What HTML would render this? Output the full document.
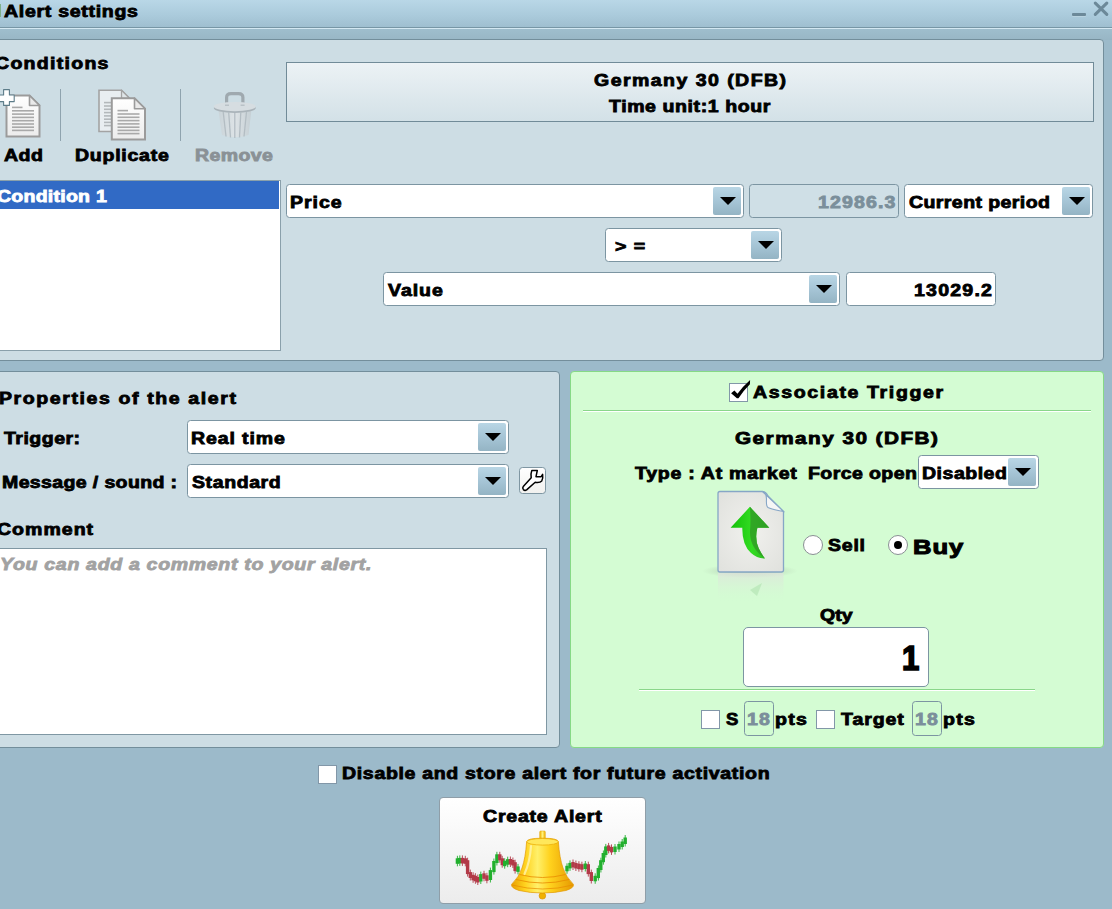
<!DOCTYPE html>
<html><head><meta charset="utf-8"><title>Alert settings</title>
<style>
*{box-sizing:border-box;margin:0;padding:0}
html,body{width:1112px;height:909px;overflow:hidden}
body{background:#9cbaca;font-family:"Liberation Sans",sans-serif;font-weight:bold;color:#000;position:relative;font-size:17.5px}
.abs{position:absolute}
.t{position:absolute;white-space:nowrap;line-height:1;transform-origin:0 0}
#title{left:0;top:0;width:1112px;height:28px;background:linear-gradient(#b9d7e7,#abcbdc 55%,#9fbfd0);border-bottom:1px solid #7796a5}
#band{left:0;top:28px;width:1112px;height:12px;background:linear-gradient(#9fbecd,#98b6c5);border-top:1px solid #d3e8f2}
.panel{position:absolute;background:#cddde4;border:1px solid #738e9b}
.combo{position:absolute;height:34px;background:#fff;border:1px solid #7c95a2;border-radius:3.5px}
.combo .btn{position:absolute;right:2px;top:2px;bottom:2px;width:28px;border-radius:2px;background:linear-gradient(#b9d6e5,#a6c5d6 50%,#94b4c4)}
.combo .btn:after{content:"";position:absolute;left:6.5px;top:10px;border-left:8px solid transparent;border-right:8px solid transparent;border-top:8.5px solid #000}
.field{position:absolute;height:34px;background:#fff;border:1px solid #7c95a2;border-radius:3.5px}
.cb{position:absolute;width:19px;height:19px;background:#fff;border:1px solid #8297a8}
</style></head><body>
<div id="title" class="abs"></div>
<div class="abs" style="left:0;top:4px;width:1px;height:13px;background:#7fb08a"></div>

<div class="abs" style="left:1072px;top:13px;width:14px;height:3px;background:#6c8999;border-radius:1px;box-shadow:0 1px 0 #b9d3e0"></div>
<svg class="abs" style="left:1092px;top:0px" width="18" height="18" viewBox="1092 0 18 18"><path d="M1095.3 3.2L1106.800 14.400M1106.800 3.200L1095.300 14.400" stroke="#6c8999" stroke-width="3.100" stroke-linecap="round" fill="none"/></svg>
<div id="band" class="abs"></div>

<!-- upper panel -->
<div class="panel" style="left:-4px;top:39px;width:1108px;height:322px;border-radius:4px"></div>

<div class="abs" style="left:286px;top:62px;width:808px;height:60px;border:1px solid #718b98;background:linear-gradient(#ecf2f5,#d3e1e7)"></div>


<div class="abs" style="left:60px;top:89px;width:1px;height:52px;background:#8fa3ae"></div>
<div class="abs" style="left:180px;top:89px;width:1px;height:52px;background:#8fa3ae"></div>
<svg class="abs" style="left:-2px;top:86px" width="46" height="54" viewBox="-2 86 46 54">
<defs><linearGradient id="dg" x1="0" y1="0" x2="0" y2="1"><stop offset="0" stop-color="#ffffff"/><stop offset="1" stop-color="#ececec"/></linearGradient></defs>
<path d="M6.5 95.5H29.5L39.5 105.5V136.5H6.5Z" fill="url(#dg)" stroke="#9b9b9b" stroke-width="2" stroke-linejoin="miter"/>
<path d="M29.5 95.5V105.5H39.5Z" fill="#e9e9e9" stroke="#9b9b9b" stroke-width="1.6" stroke-linejoin="round"/>
<path d="M12 107.4H22.5" stroke="#a9a9a9" stroke-width="1.6"/><path d="M12 110.8H34" stroke="#a9a9a9" stroke-width="1.6"/><path d="M12 114.1H34" stroke="#a9a9a9" stroke-width="1.6"/><path d="M12 117.4H34" stroke="#a9a9a9" stroke-width="1.6"/><path d="M12 120.7H34" stroke="#a9a9a9" stroke-width="1.6"/><path d="M12 124H34" stroke="#a9a9a9" stroke-width="1.6"/><path d="M12 127.2H34" stroke="#a9a9a9" stroke-width="1.6"/><path d="M12 130.4H34" stroke="#a9a9a9" stroke-width="1.6"/>
<path d="M3.6 89.6H9.4V95H14.2V101.6H9.4V105.4H3.6V101.6H-1.5V95H3.6Z" fill="#ffffff" stroke="#5d7c89" stroke-width="1.1" stroke-linejoin="round"/>
</svg>
<svg class="abs" style="left:95px;top:86px" width="56" height="58" viewBox="95 86 56 58">
<path d="M99 90.3H121.5L129.5 98.3V131.5H99Z" fill="#e9eef1" stroke="#a3a3a3" stroke-width="1.6"/>
<path d="M121.5 90.3V98.3H129.5Z" fill="#dfe5e8" stroke="#a3a3a3" stroke-width="1.3" stroke-linejoin="round"/>
<path d="M104 102.6H112" stroke="#b3b8bb" stroke-width="1.6"/><path d="M104 106H112" stroke="#b3b8bb" stroke-width="1.6"/><path d="M104 109.3H112" stroke="#b3b8bb" stroke-width="1.6"/><path d="M104 112.6H112" stroke="#b3b8bb" stroke-width="1.6"/><path d="M104 115.9H112" stroke="#b3b8bb" stroke-width="1.6"/><path d="M104 119.2H112" stroke="#b3b8bb" stroke-width="1.6"/><path d="M104 122.4H112" stroke="#b3b8bb" stroke-width="1.6"/><path d="M104 125.6H112" stroke="#b3b8bb" stroke-width="1.6"/>
<path d="M111.8 98.2H134.5L145 108.7V139.6H111.8Z" fill="url(#dg)" stroke="#9b9b9b" stroke-width="2"/>
<path d="M134.5 98.2V108.7H145Z" fill="#e9e9e9" stroke="#9b9b9b" stroke-width="1.6" stroke-linejoin="round"/>
<path d="M117.5 110.6H128" stroke="#a9a9a9" stroke-width="1.6"/><path d="M117.5 114H139.5" stroke="#a9a9a9" stroke-width="1.6"/><path d="M117.5 117.3H139.5" stroke="#a9a9a9" stroke-width="1.6"/><path d="M117.5 120.6H139.5" stroke="#a9a9a9" stroke-width="1.6"/><path d="M117.5 123.9H139.5" stroke="#a9a9a9" stroke-width="1.6"/><path d="M117.5 127.2H139.5" stroke="#a9a9a9" stroke-width="1.6"/><path d="M117.5 130.4H139.5" stroke="#a9a9a9" stroke-width="1.6"/><path d="M117.5 133.6H139.5" stroke="#a9a9a9" stroke-width="1.6"/>
</svg>
<svg class="abs" style="left:208px;top:88px" width="54" height="54" viewBox="208 88 54 54">
<defs><linearGradient id="tg" x1="0" y1="0" x2="1" y2="0"><stop offset="0" stop-color="#c9d3d8"/><stop offset="0.5" stop-color="#dde3e6"/><stop offset="1" stop-color="#c5cfd4"/></linearGradient></defs>
<path d="M226.6 104.5V97.5Q226.600 93.6 231 93.600H238.500Q242.900 93.600 242.900 97.500V104.500" fill="none" stroke="#9fa9af" stroke-width="3.200"/>
<path d="M218.300 109.500L222 135Q235 139.500 248.500 135L251.500 109.500Z" fill="url(#tg)"/>
<g stroke="#b3bdc3" stroke-width="1.300" fill="none"><path d="M223.200 112L226 136.500"/><path d="M228.700 112.500L230.500 137.500"/><path d="M234.800 113V138"/><path d="M240.800 112.500L239.500 137.500"/><path d="M246.500 112L244 136.500"/></g>
<ellipse cx="234.8" cy="107.9" rx="21" ry="5" fill="#aab4ba"/>
<ellipse cx="234.8" cy="106.6" rx="21" ry="4.6" fill="#d6dde1"/>
<path d="M225 105.2H229M240.600 105.200H244.600" stroke="#b9c2c7" stroke-width="1.400"/>
</svg>



<div class="abs" style="left:-4px;top:180px;width:285px;height:171px;background:#fff;border:1px solid #8aa0ab"></div>
<div class="abs" style="left:0;top:181px;width:279px;height:28px;background:#316ac5"></div>


<div class="combo" style="left:286px;top:184px;width:458px"><div class="btn"></div></div>
<div class="field" style="left:749px;top:184px;width:150px;background:#cfdfe6"></div>
<div class="combo" style="left:904px;top:184px;width:189px"><div class="btn"></div></div>
<div class="combo" style="left:605px;top:228px;width:177px"><div class="btn"></div></div>
<div class="combo" style="left:383px;top:272px;width:457px"><div class="btn"></div></div>
<div class="field" style="left:846px;top:272px;width:150px"></div>

<!-- lower-left panel -->
<div class="panel" style="left:-4px;top:371px;width:564px;height:377px;border-radius:4px"></div>


<div class="combo" style="left:187px;top:420px;width:322px"><div class="btn"></div></div>

<div class="combo" style="left:187px;top:464px;width:322px"><div class="btn"></div></div>
<div class="abs" style="left:519px;top:467px;width:27px;height:27px;border:1px solid #7f96a2;border-radius:3.5px;background:linear-gradient(#ffffff,#f1f1ef)"></div>
<svg class="abs" style="left:519px;top:467px" width="27" height="27" viewBox="519 467 27 27">
<path d="M531.8 470.5H537.3L536 476.700H541.200L542.600 474.400Q543.300 478.500 541.700 481Q540 483 535.200 482.300L526.600 489.900Q524.800 491 523.400 489.600Q522.100 488.100 523.300 486.500L531.200 477.800Q530.600 473.500 531.800 470.500Z" fill="#ffffff" stroke="#000" stroke-width="1.500" stroke-linejoin="round"/>
</svg>

<div class="abs" style="left:-4px;top:548px;width:551px;height:187px;background:#fff;border:1px solid #7f97a3"></div>


<!-- green panel -->
<div class="abs" style="left:570px;top:371px;width:534px;height:377px;background:#d4fcd3;border:1px solid #86d986;border-radius:4px"></div>
<div class="cb" style="left:729px;top:383px"></div>
<svg class="abs" style="left:728px;top:378px" width="26" height="24" viewBox="728 378 26 24"><path d="M731.1 393.200L734.400 390.500L737.500 393.800Q743 386.200 750.100 380L749.900 384.200Q743.500 390.500 738.500 398.200L736.900 398.200Z" fill="#000"/></svg>

<div class="abs" style="left:583px;top:410px;width:508px;height:2px;background:linear-gradient(#8ad68a 50%,#ffffff 50%)"></div>



<div class="combo" style="left:918px;top:455px;width:121px"><div class="btn"></div></div>
<svg class="abs" style="left:700px;top:485px" width="100" height="120" viewBox="700 485 100 120">
<defs>
<radialGradient id="pg" cx="0.5" cy="0.5" r="0.65"><stop offset="0" stop-color="#f1f1ee"/><stop offset="1" stop-color="#e1e2de"/></radialGradient>
<linearGradient id="ga" x1="0" y1="0" x2="1" y2="0"><stop offset="0" stop-color="#12c008"/><stop offset="0.55" stop-color="#33dc22"/><stop offset="1" stop-color="#2fb520"/></linearGradient>
<linearGradient id="rf" x1="0" y1="0" x2="0" y2="1"><stop offset="0" stop-color="#dfe4dc" stop-opacity="0.800"/><stop offset="1" stop-color="#d2fcd2" stop-opacity="0"/></linearGradient>
<radialGradient id="sh" cx="0.5" cy="0.5" r="0.5"><stop offset="0" stop-color="#97a897" stop-opacity="0.700"/><stop offset="1" stop-color="#9fb09f" stop-opacity="0"/></radialGradient>
</defs>
<ellipse cx="750" cy="571" rx="48" ry="7" fill="url(#sh)"/>
<rect x="718" y="573" width="65.500" height="30" fill="url(#rf)"/>
<path d="M750 590L762 583L757 596Z" fill="#b5e6b5" opacity="0.7"/>
<path d="M720 491.500H762.500Q766 492 768 496L783.500 511.500V570Q783.500 572 781.500 572H720Q718 572 718 570V493.500Q718 491.500 720 491.500Z" fill="url(#pg)" stroke="#86a6c6" stroke-width="1.300"/>
<path d="M762.500 491.500Q766.500 493 766.500 499Q766 506 768 507.500Q772 509.500 783.500 511.500Z" fill="#f6f6f6" stroke="#86a6c6" stroke-width="1.100"/>
<path d="M749.900 506.800L769.300 527.700H757.400Q754.500 539 758.700 548.300Q761.500 554 765 558.600Q757 558.500 751 553Q742 545 742.300 527.700H730.600Z" fill="url(#ga)"/>
<path d="M749.900 506.800Q751 520 750 531Q749.500 548 765 558.600Q761.500 554 758.700 548.300Q754.500 539 757.400 527.700H769.300Z" fill="#2f9a25" opacity="0.800"/>
</svg>
<div class="abs" style="left:803px;top:535px;width:20px;height:20px;border-radius:50%;background:#fff;border:1px solid #8a8f94"></div>

<div class="abs" style="left:888px;top:535px;width:20px;height:20px;border-radius:50%;background:#fff;border:1px solid #8a8f94"></div>
<div class="abs" style="left:894px;top:541px;width:8px;height:8px;border-radius:50%;background:#000"></div>


<div class="field" style="left:743px;top:627px;width:186px;height:60px;border-radius:5px"></div>
<div class="abs" style="left:639px;top:689px;width:396px;height:2px;background:linear-gradient(#8ad68a 50%,#ffffff 50%)"></div>
<div class="cb" style="left:701px;top:709.5px"></div>

<div class="field" style="left:744px;top:701px;width:30px;height:35px;background:#d2fcd2"></div>

<div class="cb" style="left:816px;top:709.5px"></div>

<div class="field" style="left:912px;top:701px;width:30px;height:35px;background:#d2fcd2"></div>


<!-- bottom -->
<div class="cb" style="left:318px;top:765px"></div>

<div class="abs" style="left:439px;top:797px;width:207px;height:107px;border:1px solid #8f9ea8;border-radius:4px;background:linear-gradient(#ffffff,#ececec)"></div>

<svg class="abs" style="left:450px;top:826px" width="186" height="78" viewBox="450 826 186 78">
<defs>
<linearGradient id="bg1" x1="0" y1="0" x2="1" y2="0"><stop offset="0" stop-color="#e8a000"/><stop offset="0.22" stop-color="#ffd21e"/><stop offset="0.42" stop-color="#fff06a"/><stop offset="0.62" stop-color="#ffd21e"/><stop offset="1" stop-color="#e79a00"/></linearGradient>
<linearGradient id="bg2" x1="0" y1="0" x2="1" y2="0"><stop offset="0" stop-color="#f0b000"/><stop offset="0.5" stop-color="#fff27a"/><stop offset="1" stop-color="#f0b000"/></linearGradient>
</defs>
<rect x="455.7" y="858.3" width="3.4" height="5.5" fill="#22b02e"/><path d="M457.4 855.8V866.3" stroke="#22b02e" stroke-width="0.9"/><rect x="458.1" y="857.9" width="3.4" height="5.5" fill="#22b02e"/><path d="M459.8 855.4V865.9" stroke="#22b02e" stroke-width="0.9"/><rect x="460.7" y="857.9" width="3.4" height="5.5" fill="#b23a48"/><path d="M462.4 855.4V865.9" stroke="#b23a48" stroke-width="0.9"/><rect x="463.6" y="858.3" width="3.4" height="5.5" fill="#b23a48"/><path d="M465.3 855.8V866.3" stroke="#b23a48" stroke-width="0.9"/><rect x="465.9" y="860.2" width="3.4" height="13.9" fill="#b23a48"/><path d="M467.6 857.7V876.6" stroke="#b23a48" stroke-width="0.9"/><rect x="468.6" y="872.1" width="3.4" height="5.9" fill="#b23a48"/><path d="M470.3 869.6V880.5" stroke="#b23a48" stroke-width="0.9"/><rect x="471.4" y="874.8" width="3.4" height="5.5" fill="#b23a48"/><path d="M473.1 872.2V882.8" stroke="#b23a48" stroke-width="0.9"/><rect x="473.7" y="875.8" width="3.4" height="5.5" fill="#b23a48"/><path d="M475.4 873.2V883.8" stroke="#b23a48" stroke-width="0.9"/><rect x="476.1" y="877.0" width="3.4" height="5.5" fill="#b23a48"/><path d="M477.8 874.5V885.0" stroke="#b23a48" stroke-width="0.9"/><rect x="479.1" y="874.1" width="3.4" height="7.4" fill="#22b02e"/><path d="M480.8 871.6V884.0" stroke="#22b02e" stroke-width="0.9"/><rect x="482.3" y="873.3" width="3.4" height="5.5" fill="#b23a48"/><path d="M484.0 870.8V881.3" stroke="#b23a48" stroke-width="0.9"/><rect x="485.2" y="875.3" width="3.4" height="5.5" fill="#b23a48"/><path d="M486.9 872.8V883.3" stroke="#b23a48" stroke-width="0.9"/><rect x="488.7" y="870.1" width="3.4" height="9.9" fill="#22b02e"/><path d="M490.4 867.6V882.5" stroke="#22b02e" stroke-width="0.9"/><rect x="492.2" y="861.0" width="3.4" height="11.1" fill="#22b02e"/><path d="M493.9 858.5V874.6" stroke="#22b02e" stroke-width="0.9"/><rect x="495.2" y="854.3" width="3.4" height="8.7" fill="#22b02e"/><path d="M496.9 851.8V865.5" stroke="#22b02e" stroke-width="0.9"/><rect x="498.1" y="854.3" width="3.4" height="6.0" fill="#b23a48"/><path d="M499.8 851.8V862.8" stroke="#b23a48" stroke-width="0.9"/><rect x="500.6" y="858.3" width="3.4" height="6.9" fill="#b23a48"/><path d="M502.2 855.8V867.7" stroke="#b23a48" stroke-width="0.9"/><rect x="503.0" y="860.7" width="3.4" height="5.5" fill="#22b02e"/><path d="M504.7 858.2V868.7" stroke="#22b02e" stroke-width="0.9"/><rect x="506.0" y="859.2" width="3.4" height="5.5" fill="#22b02e"/><path d="M507.7 856.7V867.2" stroke="#22b02e" stroke-width="0.9"/><rect x="508.7" y="859.0" width="3.4" height="5.5" fill="#b23a48"/><path d="M510.4 856.5V867.0" stroke="#b23a48" stroke-width="0.9"/><rect x="511.2" y="860.0" width="3.4" height="5.5" fill="#b23a48"/><path d="M512.9 857.5V868.0" stroke="#b23a48" stroke-width="0.9"/><rect x="513.4" y="862.2" width="3.4" height="8.9" fill="#b23a48"/><path d="M515.1 859.7V873.6" stroke="#b23a48" stroke-width="0.9"/><rect x="516.3" y="866.4" width="3.4" height="5.5" fill="#22b02e"/><path d="M518.0 863.9V874.4" stroke="#22b02e" stroke-width="0.9"/><rect x="565.3" y="865.8" width="3.4" height="5.5" fill="#22b02e"/><path d="M567.0 863.3V873.8" stroke="#22b02e" stroke-width="0.9"/><rect x="568.3" y="862.9" width="3.4" height="5.5" fill="#22b02e"/><path d="M570.0 860.4V870.9" stroke="#22b02e" stroke-width="0.9"/><rect x="571.3" y="862.0" width="3.4" height="5.5" fill="#b23a48"/><path d="M573.0 859.5V870.0" stroke="#b23a48" stroke-width="0.9"/><rect x="574.2" y="863.0" width="3.4" height="5.5" fill="#b23a48"/><path d="M575.9 860.5V871.0" stroke="#b23a48" stroke-width="0.9"/><rect x="577.2" y="863.7" width="3.4" height="5.5" fill="#b23a48"/><path d="M578.9 861.2V871.7" stroke="#b23a48" stroke-width="0.9"/><rect x="580.2" y="864.2" width="3.4" height="5.5" fill="#b23a48"/><path d="M581.9 861.7V872.2" stroke="#b23a48" stroke-width="0.9"/><rect x="583.6" y="863.5" width="3.4" height="5.5" fill="#22b02e"/><path d="M585.3 861.0V871.5" stroke="#22b02e" stroke-width="0.9"/><rect x="586.6" y="864.2" width="3.4" height="9.9" fill="#b23a48"/><path d="M588.3 861.7V876.6" stroke="#b23a48" stroke-width="0.9"/><rect x="589.6" y="872.1" width="3.4" height="8.9" fill="#b23a48"/><path d="M591.3 869.6V883.5" stroke="#b23a48" stroke-width="0.9"/><rect x="593.5" y="875.8" width="3.4" height="5.5" fill="#22b02e"/><path d="M595.2 873.3V883.8" stroke="#22b02e" stroke-width="0.9"/><rect x="596.6" y="868.0" width="3.4" height="10.1" fill="#22b02e"/><path d="M598.4 865.5V880.6" stroke="#22b02e" stroke-width="0.9"/><rect x="599.1" y="860.2" width="3.4" height="9.8" fill="#22b02e"/><path d="M600.9 857.7V872.5" stroke="#22b02e" stroke-width="0.9"/><rect x="601.6" y="853.0" width="3.4" height="9.2" fill="#22b02e"/><path d="M603.4 850.5V864.7" stroke="#22b02e" stroke-width="0.9"/><rect x="604.1" y="846.4" width="3.4" height="8.6" fill="#22b02e"/><path d="M605.8 843.9V857.5" stroke="#22b02e" stroke-width="0.9"/><rect x="606.9" y="845.4" width="3.4" height="5.5" fill="#b23a48"/><path d="M608.6 842.9V853.4" stroke="#b23a48" stroke-width="0.9"/><rect x="609.8" y="846.9" width="3.4" height="5.5" fill="#b23a48"/><path d="M611.5 844.4V854.9" stroke="#b23a48" stroke-width="0.9"/><rect x="613.3" y="846.5" width="3.4" height="5.5" fill="#22b02e"/><path d="M615.0 844.0V854.5" stroke="#22b02e" stroke-width="0.9"/><rect x="617.3" y="844.0" width="3.4" height="5.5" fill="#22b02e"/><path d="M619.0 841.5V852.0" stroke="#22b02e" stroke-width="0.9"/><rect x="620.5" y="841.5" width="3.4" height="5.5" fill="#22b02e"/><path d="M622.2 839.0V849.5" stroke="#22b02e" stroke-width="0.9"/><rect x="623.5" y="837.5" width="3.4" height="6.5" fill="#22b02e"/><path d="M625.2 835.0V846.5" stroke="#22b02e" stroke-width="0.9"/>
<circle cx="542.400" cy="895.800" r="3.300" fill="#f0b100" stroke="#d88f00" stroke-width="0.600"/>
<rect x="540.300" y="888" width="4.200" height="6" fill="#e9a800"/>
<rect x="539.700" y="831" width="5.600" height="10" rx="1" fill="url(#bg2)" stroke="#e0a000" stroke-width="0.500"/>
<path d="M526.600 842Q526.600 838.200 542.500 838.200Q558.400 838.200 558.400 842Q559.500 858 563 868Q566 877 573.500 884.500Q574 888 566 890.500Q555 893 542.500 893Q530 893 519 890.500Q511 888 511.500 884.500Q519 877 522 868Q525.500 858 526.600 842Z" fill="url(#bg1)" stroke="#e39a00" stroke-width="0.700"/>
<ellipse cx="542.500" cy="841.800" rx="15.800" ry="3.300" fill="#ffe75a" stroke="#eaa800" stroke-width="0.700"/>
<path d="M519.500 874.500Q542.500 880.500 565.500 874.500" fill="none" stroke="#e88a00" stroke-width="0.800"/>
<path d="M516 879.500Q542.500 886.500 569 879.500" fill="none" stroke="#e88a00" stroke-width="0.800"/>
<path d="M512 885Q542.500 893 573 885" fill="none" stroke="#e88a00" stroke-width="0.700"/>
<path d="M531 846Q530 862 524.500 874" fill="none" stroke="#fff8c0" stroke-width="2.200" opacity="0.700" stroke-linecap="round"/>
</svg>
<div class="t" style="left:4.0px;top:4.0px;color:#000;font-size:16px;letter-spacing:0.58px;transform:scaleX(1.220);-webkit-text-stroke:0.80px currentColor;">Alert settings</div>
<div class="t" style="left:-5.5px;top:56.0px;color:#000;font-size:16px;letter-spacing:1.05px;transform:scaleX(1.220);-webkit-text-stroke:0.80px currentColor;">Conditions</div>
<div class="t" style="left:593.5px;top:73.0px;color:#000;font-size:16px;letter-spacing:1.19px;transform:scaleX(1.220);-webkit-text-stroke:0.80px currentColor;">Germany 30 (DFB)</div>
<div class="t" style="left:609.1px;top:99.0px;color:#000;font-size:16px;letter-spacing:0.48px;transform:scaleX(1.220);-webkit-text-stroke:0.80px currentColor;">Time unit:1 hour</div>
<div class="t" style="left:4.0px;top:148.0px;color:#000;font-size:16px;letter-spacing:0.41px;transform:scaleX(1.220);-webkit-text-stroke:0.80px currentColor;">Add</div>
<div class="t" style="left:75.0px;top:148.0px;color:#000;font-size:16px;letter-spacing:0.61px;transform:scaleX(1.220);-webkit-text-stroke:0.80px currentColor;">Duplicate</div>
<div class="t" style="left:195.0px;top:148.0px;color:#8a9196;font-size:16px;letter-spacing:0.31px;transform:scaleX(1.220);-webkit-text-stroke:0.80px currentColor;">Remove</div>
<div class="t" style="left:-3.0px;top:189.0px;color:#fff;font-size:16px;letter-spacing:0.20px;transform:scaleX(1.220);-webkit-text-stroke:0.80px currentColor;">Condition 1</div>
<div class="t" style="left:289.7px;top:195.0px;color:#000;font-size:16px;letter-spacing:0.80px;transform:scaleX(1.220);-webkit-text-stroke:0.80px currentColor;">Price</div>
<div class="t" style="left:817.6px;top:195.0px;color:#7b8f9b;font-size:16px;letter-spacing:0.92px;transform:scaleX(1.220);-webkit-text-stroke:0.80px currentColor;">12986.3</div>
<div class="t" style="left:908.6px;top:195.0px;color:#000;font-size:16px;letter-spacing:0.34px;transform:scaleX(1.220);-webkit-text-stroke:0.80px currentColor;">Current period</div>
<div class="t" style="left:615.0px;top:239.0px;color:#000;font-size:16px;letter-spacing:0.82px;transform:scaleX(1.220);-webkit-text-stroke:0.80px currentColor;">&gt; =</div>
<div class="t" style="left:387.8px;top:283.0px;color:#000;font-size:16px;letter-spacing:0.78px;transform:scaleX(1.220);-webkit-text-stroke:0.80px currentColor;">Value</div>
<div class="t" style="left:913.9px;top:283.0px;color:#000;font-size:16px;letter-spacing:1.00px;transform:scaleX(1.220);-webkit-text-stroke:0.80px currentColor;">13029.2</div>
<div class="t" style="left:-1.5px;top:391.0px;color:#000;font-size:16px;letter-spacing:1.31px;transform:scaleX(1.220);-webkit-text-stroke:0.80px currentColor;">Properties of the alert</div>
<div class="t" style="left:3.8px;top:431.0px;color:#000;font-size:16px;letter-spacing:0.40px;transform:scaleX(1.220);-webkit-text-stroke:0.80px currentColor;">Trigger:</div>
<div class="t" style="left:190.8px;top:431.0px;color:#000;font-size:16px;letter-spacing:0.73px;transform:scaleX(1.220);-webkit-text-stroke:0.80px currentColor;">Real time</div>
<div class="t" style="left:2.0px;top:475.0px;color:#000;font-size:16px;letter-spacing:0.30px;transform:scaleX(1.220);-webkit-text-stroke:0.80px currentColor;">Message / sound :</div>
<div class="t" style="left:191.8px;top:475.0px;color:#000;font-size:16px;letter-spacing:0.48px;transform:scaleX(1.220);-webkit-text-stroke:0.80px currentColor;">Standard</div>
<div class="t" style="left:-3.0px;top:522.0px;color:#000;font-size:16px;letter-spacing:0.83px;transform:scaleX(1.220);-webkit-text-stroke:0.80px currentColor;">Comment</div>
<div class="t" style="left:0.0px;top:557.0px;color:#a2a2a2;font-size:16px;letter-spacing:0.56px;transform:scaleX(1.220);-webkit-text-stroke:0.80px currentColor;font-style:italic;">You can add a comment to your alert.</div>
<div class="t" style="left:753.2px;top:385.0px;color:#000;font-size:16px;letter-spacing:1.35px;transform:scaleX(1.220);-webkit-text-stroke:0.80px currentColor;">Associate Trigger</div>
<div class="t" style="left:734.8px;top:430.0px;color:#000;font-size:17px;letter-spacing:1.20px;transform:scaleX(1.220);-webkit-text-stroke:0.85px currentColor;">Germany 30 (DFB)</div>
<div class="t" style="left:635.0px;top:466.0px;color:#000;font-size:16px;letter-spacing:0.60px;transform:scaleX(1.220);-webkit-text-stroke:0.80px currentColor;">Type : At market</div>
<div class="t" style="left:807.8px;top:466.0px;color:#000;font-size:16px;letter-spacing:0.33px;transform:scaleX(1.220);-webkit-text-stroke:0.80px currentColor;">Force open</div>
<div class="t" style="left:921.7px;top:466.0px;color:#000;font-size:16px;letter-spacing:0.41px;transform:scaleX(1.220);-webkit-text-stroke:0.80px currentColor;">Disabled</div>
<div class="t" style="left:827.7px;top:538.0px;color:#000;font-size:16px;letter-spacing:0.63px;transform:scaleX(1.220);-webkit-text-stroke:0.80px currentColor;">Sell</div>
<div class="t" style="left:913.0px;top:536.0px;color:#000;font-size:21px;letter-spacing:0.78px;transform:scaleX(1.220);-webkit-text-stroke:1.05px currentColor;">Buy</div>
<div class="t" style="left:820.0px;top:608.0px;color:#000;font-size:16px;letter-spacing:0.04px;transform:scaleX(1.220);-webkit-text-stroke:0.80px currentColor;">Qty</div>
<div class="t" style="left:902.0px;top:641.0px;color:#000;font-size:34.5px;letter-spacing:0.00px;transform:scaleX(0.900);-webkit-text-stroke:1.73px currentColor;">1</div>
<div class="t" style="left:725.6px;top:712.0px;color:#000;font-size:16px;letter-spacing:0.00px;transform:scaleX(1.155);-webkit-text-stroke:0.80px currentColor;">S</div>
<div class="t" style="left:747.0px;top:712.0px;color:#7b8f9b;font-size:16px;letter-spacing:0.98px;transform:scaleX(1.220);-webkit-text-stroke:0.80px currentColor;">18</div>
<div class="t" style="left:775.3px;top:712.0px;color:#000;font-size:16px;letter-spacing:1.07px;transform:scaleX(1.220);-webkit-text-stroke:0.80px currentColor;">pts</div>
<div class="t" style="left:841.0px;top:712.0px;color:#000;font-size:16px;letter-spacing:0.74px;transform:scaleX(1.220);-webkit-text-stroke:0.80px currentColor;">Target</div>
<div class="t" style="left:915.0px;top:712.0px;color:#7b8f9b;font-size:16px;letter-spacing:0.98px;transform:scaleX(1.220);-webkit-text-stroke:0.80px currentColor;">18</div>
<div class="t" style="left:943.4px;top:712.0px;color:#000;font-size:16px;letter-spacing:1.07px;transform:scaleX(1.220);-webkit-text-stroke:0.80px currentColor;">pts</div>
<div class="t" style="left:341.9px;top:766.0px;color:#000;font-size:16px;letter-spacing:0.55px;transform:scaleX(1.220);-webkit-text-stroke:0.80px currentColor;">Disable and store alert for future activation</div>
<div class="t" style="left:482.9px;top:809.0px;color:#000;font-size:16px;letter-spacing:0.65px;transform:scaleX(1.220);-webkit-text-stroke:0.80px currentColor;">Create Alert</div>
</body></html>
